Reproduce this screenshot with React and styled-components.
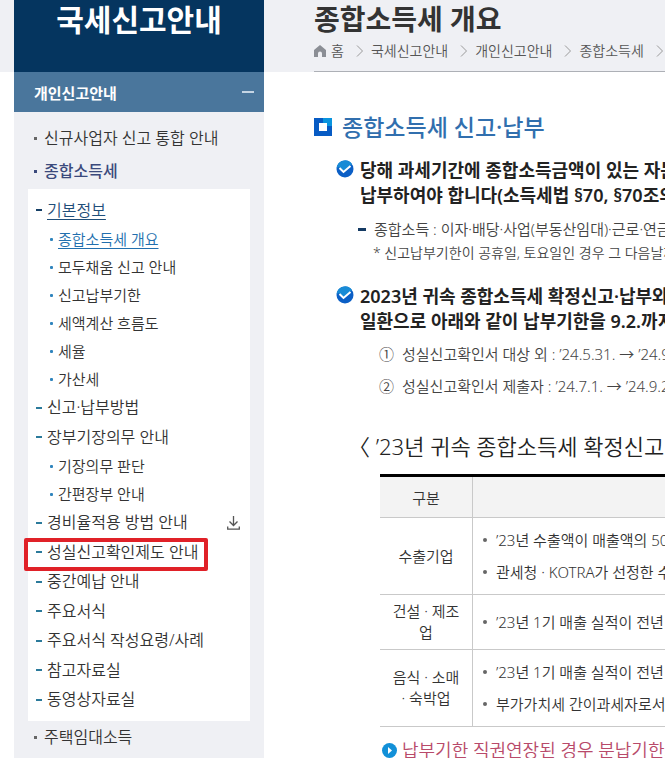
import React from "react";
import styled, { createGlobalStyle, css } from "styled-components";

const GlobalStyle = createGlobalStyle`
  * {
    box-sizing: border-box;
  }
  body {
    margin: 0;
    background: #fff;
    color: #333;
    font-family: "Noto Sans", "Noto Sans CJK KR", sans-serif;
    font-size: 16px;
    font-weight: 350;
  }
  ul, ol, h1, h2, h3, p {
    margin: 0;
    padding: 0;
    list-style: none;
    font-weight: inherit;
  }
  a {
    color: inherit;
    text-decoration: none;
  }
  svg {
    flex: none;
  }
`;

const Page = styled.div`
  display: flex;
  align-items: stretch;
  min-height: 100vh;
  padding-left: 14px;
  overflow: hidden;
  background: linear-gradient(#eff0f4 72px, #fff 72px);
`;

/* ---------- side menu ---------- */

const Sidebar = styled.aside`
  flex: 0 0 250px;
  background: #eff0f4;
`;

const SideTitle = styled.h2`
  height: 72px;
  background: #05355f;
  color: #fff;
  font-size: 30px;
  font-weight: 700;
  line-height: 40px;
  text-align: center;
`;

const SideToggle = styled.button`
  display: flex;
  align-items: center;
  justify-content: space-between;
  width: 100%;
  height: 40px;
  padding: 0 10px 0 20px;
  border: 0;
  background: #4a769c;
  color: #fff;
  font: inherit;
  font-size: 15px;
  font-weight: 700;
  text-align: left;

  &::after {
    content: "";
    width: 12px;
    height: 2px;
    background: #c5d5e4;
  }
`;

const SideList = styled.ul`
  padding: 10px 14px 0;
`;

const SideLink = styled.a`
  display: flex;
  align-items: center;
  padding-left: 6px;
  line-height: 33px;
  color: ${(props) => (props.$active ? "#3b4a7c" : "#333")};
  font-weight: ${(props) => (props.$active ? 500 : 350)};

  &::before {
    content: "";
    width: 3px;
    height: 3px;
    margin-right: 7px;
    background: ${(props) => (props.$active ? "#3b4a7c" : "#666")};
  }
`;

const MenuPanel = styled.ul`
  margin-top: 1px;
  padding: 6px 0 7px;
  background: #fff;
`;

const MenuItem = styled.li`
  position: relative;
  line-height: 29px;

  &:nth-child(odd) {
    line-height: 30px;
  }
`;

const MenuRow = styled.div`
  display: flex;
  align-items: center;
  justify-content: space-between;
  padding: 0 10px 0 8px;
`;

const MenuLink = styled.a`
  display: flex;
  align-items: center;
  color: ${(props) => (props.$active ? "#1f4e79" : "#333")};
  text-decoration: ${(props) => (props.$active ? "underline" : "none")};
  text-underline-offset: 3px;

  &::before {
    content: "";
    width: 6px;
    height: 2px;
    margin-right: 5px;
    background: ${(props) => (props.$active ? "#163f66" : "#2b7a9b")};
  }
`;

const SubMenu = styled.ul`
  line-height: 28px;
`;

const SubLink = styled.a`
  display: flex;
  align-items: center;
  padding-left: 22px;
  color: ${(props) => (props.$active ? "#226fae" : "#333")};
  font-size: 15px;
  text-decoration: ${(props) => (props.$active ? "underline" : "none")};
  text-underline-offset: 3px;

  &::before {
    content: "";
    width: 3px;
    height: 3px;
    margin-right: 5px;
    border-radius: 1px;
    background: #2f84bd;
  }
`;

const IconButton = styled.button`
  display: flex;
  padding: 0;
  border: 0;
  background: none;
`;

const Marker = styled.span`
  position: absolute;
  top: 1px;
  left: -4px;
  width: 184px;
  height: 33px;
  border: 4px solid #e02128;
  border-radius: 2px;
  pointer-events: none;
`;

/* ---------- content ---------- */

const Main = styled.main`
  flex: 1;
  min-width: 0;
  margin-left: 50px;
  overflow: hidden;
  white-space: nowrap;
`;

const PageHeader = styled.header`
  height: 72px;
  border-bottom: 1px solid #adb0b6;
`;

const PageTitle = styled.h1`
  font-size: 28px;
  font-weight: 700;
  line-height: 38px;
`;

const Breadcrumb = styled.ol`
  display: flex;
  align-items: center;
  color: #555;
  font-size: 14px;
  line-height: 26px;

  li {
    display: flex;
    align-items: center;
    gap: 5px;
  }
  li > svg:last-child {
    margin: 0 5px;
  }
`;

const SectionTitle = styled.h2`
  display: flex;
  align-items: center;
  gap: 10px;
  margin-top: 39px;
  color: #316fae;
  font-size: 23px;
  font-weight: 500;
  line-height: 32px;
`;

const Notice = styled.section`
  padding-left: 22px;
  margin-top: ${(props) => props.$gap}px;
`;

const NoticeTitle = styled.h3`
  display: flex;
  gap: 6px;
  color: #222;
  font-size: 18px;
  font-weight: 600;
  line-height: 25px;

  svg {
    margin-top: 2px;
  }
`;

const DashText = styled.p`
  display: flex;
  align-items: center;
  gap: 8px;
  margin-top: 9px;
  padding-left: 22px;
  color: #444;
  font-size: 15px;
  line-height: 25px;

  &::before {
    content: "";
    flex: none;
    width: 8px;
    height: 3px;
    background: #143a63;
  }
`;

const SmallText = styled.p`
  padding-left: 37px;
  color: #444;
  font-size: 14px;
  line-height: 22px;
`;

const NumberList = styled.ol`
  padding: 4px 0 0 43px;
  color: #444;
  font-size: 15px;
  line-height: 32px;

  li {
    display: flex;
    gap: 8px;
  }
`;

const TableTitle = styled.h3`
  margin: 24px 0 0 45px;
  color: #222;
  font-size: 22px;
  line-height: 40px;
`;

const OpenBracket = styled.span`
  font-feature-settings: "halt";
`;

const TableWrap = styled.div`
  margin: 8px 0 0 66px;
  overflow: hidden;
`;

const Table = styled.table`
  width: 100%;
  border-collapse: separate;
  border-spacing: 0;
  border-top: 3px solid #000;
  table-layout: fixed;
`;

const cell = css`
  padding: 0 10px;
  border-bottom: 1px solid #c9c9c9;
  color: #333;
  font-size: 15px;
  font-weight: 350;
`;

const HeadCell = styled.th`
  ${cell}
  width: ${(props) => (props.$first ? "93px" : "auto")};
  height: 41px;
  border-right: ${(props) => (props.$first ? "1px solid #c9c9c9" : "0")};
  background: #f3f3f3;
`;

const NameCell = styled.th`
  ${cell}
  height: ${(props) => (props.$tall ? "77px" : "55px")};
  border-right: 1px solid #c9c9c9;
  line-height: 21px;
  white-space: pre-line;
`;

const BodyCell = styled.td`
  ${cell}
  line-height: 32px;
`;

const BulletItem = styled.li`
  display: flex;
  align-items: center;
  gap: 9px;

  &::before {
    content: "";
    flex: none;
    width: 4px;
    height: 4px;
    border-radius: 50%;
    background: #666;
  }
`;

const Highlight = styled.p`
  display: flex;
  align-items: center;
  gap: 5px;
  margin: 8px 0 0 68px;
  color: #b84a6a;
  font-size: 18px;
  line-height: 30px;
`;

/* ---------- icons ---------- */

function HomeIcon() {
  return (
    <svg width="12" height="12" viewBox="0 0 12 12" fill="#8b8e95" aria-hidden="true">
      <path d="M6 0 12 5V12H8V8.500Q8 6.500 6 6.500T4 8.500V12H0V5Z" />
    </svg>
  );
}

function ChevronIcon() {
  return (
    <svg width="12" height="12" viewBox="0 0 12 12" fill="none" stroke="#999" aria-hidden="true">
      <path d="M3 .5 8.500 6 3 11.500" />
    </svg>
  );
}

function DownloadIcon() {
  return (
    <svg width="13" height="14" viewBox="0 0 13 14" fill="none" stroke="#555" strokeWidth="1.300" aria-hidden="true">
      <path d="M6.500 0V9M2.500 5.500 6.500 9.500 10.500 5.500M.7 10.500V13.200H12.300V10.500" />
    </svg>
  );
}

function SquareIcon() {
  return (
    <svg width="18" height="18" viewBox="0 0 18 18" aria-hidden="true">
      <path fill="#075bc4" d="M0 0H18V18H0Z" />
      <path fill="#0a94de" d="M9 0H18V8H9Z" />
      <path fill="#fff" d="M5 5H13V13H5Z" />
    </svg>
  );
}

function CheckIcon() {
  return (
    <svg width="18" height="18" viewBox="0 0 18 18" aria-hidden="true">
      <circle cx="9" cy="9" r="8.500" fill="#0b5fc6" />
      <path d="M.6 8A8.500 8.500 0 0 1 16 4L7.500 12 3 7Z" fill="#188bd6" />
      <path d="M3.500 8 7.500 12 14.500 6" fill="none" stroke="#fff" strokeWidth="2" />
    </svg>
  );
}

function PlayIcon() {
  return (
    <svg width="15" height="15" viewBox="0 0 15 15" aria-hidden="true">
      <circle cx="7.500" cy="7.500" r="7.500" fill="#1290d8" />
      <path d="M6 4 10 7.500 6 11Z" fill="#fff" />
    </svg>
  );
}

/* ---------- data ---------- */

const menu = [
  {
    label: "기본정보",
    active: true,
    children: ["종합소득세 개요", "모두채움 신고 안내", "신고납부기한", "세액계산 흐름도", "세율", "가산세"],
  },
  { label: "신고·납부방법" },
  { label: "장부기장의무 안내", children: ["기장의무 판단", "간편장부 안내"] },
  { label: "경비율적용 방법 안내", download: true },
  { label: "성실신고확인제도 안내", marked: true },
  { label: "중간예납 안내" },
  { label: "주요서식" },
  { label: "주요서식 작성요령/사례" },
  { label: "참고자료실" },
  { label: "동영상자료실" },
];

const crumbs = ["홈", "국세신고안내", "개인신고안내", "종합소득세"];

const rows = [
  { name: "수출기업", tall: true, items: ["’23년 수출액이 매출액의 50% 이상", "관세청 · KOTRA가 선정한 수출기업"] },
  { name: "건설 · 제조\n업", items: ["’23년 1기 매출 실적이 전년 대비"] },
  { name: "음식 · 소매\n· 숙박업", tall: true, items: ["’23년 1기 매출 실적이 전년 대비", "부가가치세 간이과세자로서"] },
];

function SideMenu() {
  return (
    <Sidebar>
      <SideTitle>국세신고안내</SideTitle>
      <SideToggle type="button" aria-expanded="true">개인신고안내</SideToggle>
      <SideList>
        <li><SideLink href="#new">신규사업자 신고 통합 안내</SideLink></li>
        <li>
          <SideLink href="#income" $active>종합소득세</SideLink>
          <MenuPanel>
            {menu.map((item) => (
              <MenuItem key={item.label}>
                <MenuRow>
                  <MenuLink href="#menu" $active={item.active}>{item.label}</MenuLink>
                  {item.download && (
                    <IconButton type="button" aria-label="다운로드"><DownloadIcon /></IconButton>
                  )}
                </MenuRow>
                {item.marked && <Marker />}
                {item.children && (
                  <SubMenu>
                    {item.children.map((child, i) => (
                      <li key={child}>
                        <SubLink href="#sub" $active={item.active && i === 0}>{child}</SubLink>
                      </li>
                    ))}
                  </SubMenu>
                )}
              </MenuItem>
            ))}
          </MenuPanel>
        </li>
        <li><SideLink href="#rent">주택임대소득</SideLink></li>
      </SideList>
    </Sidebar>
  );
}

function SupportTable() {
  return (
    <TableWrap>
      <Table>
        <thead>
          <tr>
            <HeadCell $first scope="col">구분</HeadCell>
            <HeadCell aria-label="내용" />
          </tr>
        </thead>
        <tbody>
          {rows.map((row) => (
            <tr key={row.name}>
              <NameCell scope="row" $tall={row.tall}>{row.name}</NameCell>
              <BodyCell>
                <ul>
                  {row.items.map((text) => (
                    <BulletItem key={text}>{text}</BulletItem>
                  ))}
                </ul>
              </BodyCell>
            </tr>
          ))}
        </tbody>
      </Table>
    </TableWrap>
  );
}

function App() {
  return (
    <React.Fragment>
      <GlobalStyle />
      <Page>
        <SideMenu />
        <Main>
          <PageHeader>
            <PageTitle>종합소득세 개요</PageTitle>
            <Breadcrumb>
              {crumbs.map((crumb, i) => (
                <li key={crumb}>
                  {i === 0 && <HomeIcon />}
                  <a href="#crumb">{crumb}</a>
                  <ChevronIcon />
                </li>
              ))}
            </Breadcrumb>
          </PageHeader>

          <SectionTitle><SquareIcon />종합소득세 신고·납부</SectionTitle>

          <Notice $gap={15}>
            <NoticeTitle>
              <CheckIcon />
              <span>
                당해 과세기간에 종합소득금액이 있는 자는<br />
                납부하여야 합니다(소득세법 §70, §70조의2)
              </span>
            </NoticeTitle>
            <DashText>종합소득 : 이자·배당·사업(부동산임대)·근로·연금·기타소득</DashText>
            <SmallText>* 신고납부기한이 공휴일, 토요일인 경우 그 다음날까지</SmallText>
          </Notice>

          <Notice $gap={20}>
            <NoticeTitle>
              <CheckIcon />
              <span>
                2023년 귀속 종합소득세 확정신고·납부와 관련하여<br />
                일환으로 아래와 같이 납부기한을 9.2.까지 연장
              </span>
            </NoticeTitle>
            <NumberList>
              <li><span>①</span>성실신고확인서 대상 외 : ’24.5.31. → ’24.9.2.</li>
              <li><span>②</span>성실신고확인서 제출자 : ’24.7.1. → ’24.9.2.</li>
            </NumberList>
          </Notice>

          <TableTitle><OpenBracket>〈</OpenBracket> ’23년 귀속 종합소득세 확정신고·납부</TableTitle>
          <SupportTable />
          <Highlight><PlayIcon />납부기한 직권연장된 경우 분납기한도</Highlight>
        </Main>
      </Page>
    </React.Fragment>
  );
}

export default App;
